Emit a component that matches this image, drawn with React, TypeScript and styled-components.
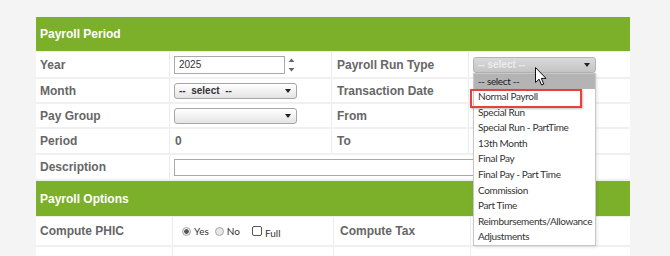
import styled, { createGlobalStyle } from "styled-components";

const GlobalStyle = createGlobalStyle`
  html, body {
    margin: 0;
    padding: 0;
    background: #f4f4f4;
  }
  body {
    font-family: "Liberation Sans", Arial, sans-serif;
  }
`;

const Page = styled.div`
  padding: 17px 0 0 36px;
  height: 256px;
  box-sizing: border-box;
  overflow: hidden;
`;

const Panel = styled.div`
  width: 594px;
  background: #fff;
`;

const SectionHeader = styled.div<{ $h: number }>`
  height: ${(p) => p.$h}px;
  box-sizing: border-box;
  background: #7db02a;
  color: #fff;
  font-weight: bold;
  font-size: 12px;
  display: flex;
  align-items: center;
  padding-left: 4px;
  border-bottom: 1px solid #eaf1df;
`;

const Row = styled.div<{ $h: number; $cols: string }>`
  display: grid;
  grid-template-columns: ${(p) => p.$cols};
  height: ${(p) => p.$h}px;
  box-sizing: border-box;
  border-bottom: 2px solid #f0f0f0;
`;

const Cell = styled.div<{ $span?: number; $pad?: number; $last?: boolean }>`
  display: flex;
  align-items: center;
  padding-left: ${(p) => p.$pad ?? 4}px;
  border-right: ${(p) => (p.$last ? "none" : "1px solid #ececec")};
  grid-column: span ${(p) => p.$span ?? 1};
  position: relative;
  min-width: 0;
  font-size: 12px;
  font-weight: bold;
  color: #666;
`;

const TextInput = styled.div<{ $w: number; $h: number }>`
  width: ${(p) => p.$w}px;
  height: ${(p) => p.$h}px;
  box-sizing: border-box;
  border: 1px solid #a9a9a9;
  background: #fff;
  font-size: 10px;
  font-weight: normal;
  color: #333;
  padding-left: 4px;
  display: flex;
  align-items: center;
  flex-shrink: 0;
`;

const Spinner = styled.svg`
  margin-left: 3px;
  display: block;
`;

const SelectBox = styled.div<{ $active?: boolean }>`
  width: 123px;
  height: 16px;
  box-sizing: border-box;
  border: 1px solid ${(p) => (p.$active ? "#b4b4b4" : "#a6a6a6")};
  border-radius: 3px;
  background: ${(p) =>
    p.$active
      ? "linear-gradient(#dadada, #c4c4c4)"
      : "linear-gradient(#ffffff, #e4e4e4)"};
  color: ${(p) => (p.$active ? "#ececec" : "#333")};
  font-size: 10px;
  font-weight: bold;
  padding: 0 5px 0 4px;
  display: flex;
  align-items: center;
  justify-content: space-between;
`;

const Caret = styled.span`
  width: 0;
  height: 0;
  border-left: 3px solid transparent;
  border-right: 3px solid transparent;
  border-top: 4px solid #222;
`;

const SelectWrap = styled.div`
  position: relative;
`;

const Dropdown = styled.div`
  position: absolute;
  top: 16px;
  left: 0;
  width: 123px;
  box-sizing: border-box;
  background: #fff;
  border: 1px solid #c8c8c8;
  box-shadow: 1px 1px 3px rgba(0, 0, 0, 0.12);
  z-index: 5;
`;

const Option = styled.div<{ $hl?: boolean }>`
  height: 15.6px;
  line-height: 15.6px;
  padding-left: 4px;
  font-family: Lato, "Open Sans", sans-serif;
  font-size: 10px;
  letter-spacing: -0.35px;
  font-weight: normal;
  color: ${(p) => (p.$hl ? "#222" : "#333")};
  background: ${(p) => (p.$hl ? "#b4b4b4" : "transparent")};
  white-space: nowrap;
`;

const Highlight = styled.div`
  position: absolute;
  left: -4px;
  top: 15px;
  width: 112px;
  height: 19px;
  box-sizing: border-box;
  border: 2px solid #e8403a;
  box-shadow: 1px 1px 2px rgba(0, 0, 0, 0.25);
  pointer-events: none;
`;

const Cursor = styled.svg`
  position: absolute;
  left: 62px;
  top: 10px;
  z-index: 6;
`;

const Choices = styled.div`
  display: flex;
  align-items: center;
  font-family: Lato, "Open Sans", sans-serif;
  font-size: 10px;
  font-weight: normal;
  color: #333;
`;

const Radio = styled.span<{ $on?: boolean }>`
  width: 9px;
  height: 9px;
  box-sizing: border-box;
  border-radius: 50%;
  border: 1px solid #a8a8a8;
  background: ${(p) =>
    p.$on
      ? "radial-gradient(circle, #555 0 2px, #e8e8e8 2.5px)"
      : "#e6e6e6"};
  margin-right: 3px;
`;

const Check = styled.span`
  width: 10px;
  height: 10px;
  box-sizing: border-box;
  border: 1px solid #555;
  border-radius: 2px;
  background: #fff;
  margin: 0 3px 0 6px;
`;

const ChoiceText = styled.span<{ $low?: boolean }>`
  margin-right: 6px;
  position: relative;
  top: ${(p) => (p.$low ? 2 : 0)}px;
`;

const periodCols = "134px 162px 137px 161px";
const optionCols = "137px 161px 137px 159px";

const runTypes = [
  "-- select --",
  "Normal Payroll",
  "Special Run",
  "Special Run - PartTime",
  "13th Month",
  "Final Pay",
  "Final Pay - Part Time",
  "Commission",
  "Part Time",
  "Reimbursements/Allowance",
  "Adjustments",
];

export default function App() {
  return (
    <>
      <GlobalStyle />
      <Page>
        <Panel>
          <SectionHeader $h={35}>Payroll Period</SectionHeader>

          <Row $h={27} $cols={periodCols}>
            <Cell>Year</Cell>
            <Cell>
              <TextInput $w={111} $h={18}>2025</TextInput>
              <Spinner width="7" height="16" viewBox="0 0 7 16">
                <path d="M0.5 5 L3.5 1.5 L6.5 5 Z" fill="#666" />
                <path d="M0.5 11 L3.5 14.5 L6.5 11 Z" fill="#666" />
              </Spinner>
            </Cell>
            <Cell $pad={5}>Payroll Run Type</Cell>
            <Cell $last>
              <SelectWrap>
                <SelectBox $active>
                  <span>-- select --</span>
                  <Caret />
                </SelectBox>
                <Dropdown>
                  {runTypes.map((t, i) => (
                    <Option key={t} $hl={i === 0}>
                      {t}
                    </Option>
                  ))}
                  <Highlight />
                </Dropdown>
                <Cursor width="12" height="19" viewBox="0 0 12 19">
                  <path
                    d="M0.5 0.5 L0.5 15.5 L4 12.2 L6.6 18 L8.8 17 L6.3 11.4 L11 11.4 Z"
                    fill="#fff"
                    stroke="#111"
                    strokeWidth="1"
                    strokeLinejoin="round"
                  />
                </Cursor>
              </SelectWrap>
            </Cell>
          </Row>

          <Row $h={25} $cols={periodCols}>
            <Cell>Month</Cell>
            <Cell>
              <SelectBox>
                <span>-- &nbsp;select &nbsp;--</span>
                <Caret />
              </SelectBox>
            </Cell>
            <Cell $pad={5}>Transaction Date</Cell>
            <Cell $last />
          </Row>

          <Row $h={25} $cols={periodCols}>
            <Cell>Pay Group</Cell>
            <Cell>
              <SelectBox>
                <span />
                <Caret />
              </SelectBox>
            </Cell>
            <Cell $pad={5}>From</Cell>
            <Cell $last />
          </Row>

          <Row $h={26} $cols={periodCols}>
            <Cell>Period</Cell>
            <Cell $pad={5}>0</Cell>
            <Cell $pad={5}>To</Cell>
            <Cell $last />
          </Row>

          <Row $h={26} $cols={periodCols}>
            <Cell>Description</Cell>
            <Cell $span={3} $last>
              <TextInput $w={420} $h={17} />
            </Cell>
          </Row>

          <SectionHeader $h={36}>Payroll Options</SectionHeader>

          <Row $h={30} $cols={optionCols}>
            <Cell>Compute PHIC</Cell>
            <Cell $pad={9}>
              <Choices>
                <Radio $on />
                <ChoiceText>Yes</ChoiceText>
                <Radio />
                <ChoiceText>No</ChoiceText>
                <Check />
                <ChoiceText $low>Full</ChoiceText>
              </Choices>
            </Cell>
            <Cell $pad={6}>Compute Tax</Cell>
            <Cell $last />
          </Row>

          <Row $h={30} $cols={optionCols}>
            <Cell />
            <Cell />
            <Cell />
            <Cell $last />
          </Row>
        </Panel>
      </Page>
    </>
  );
}
